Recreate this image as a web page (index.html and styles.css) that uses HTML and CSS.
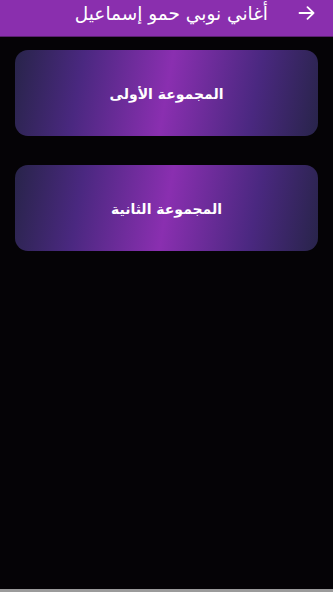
FILE: index.html
```html
<!DOCTYPE html>
<html lang="ar" dir="rtl">
<head>
<meta charset="utf-8">
<link rel="stylesheet" href="styles.css">
</head>
<body>
<div class="screen">
  <header class="appbar">
    <span class="back">
      <svg width="17" height="14" viewBox="0 0 17 14" fill="none" stroke="#fff" stroke-width="1.8" stroke-linecap="round" stroke-linejoin="round"><path d="M1.5 7H15.5M9.5 1.2L15.5 7L9.5 12.8"/></svg>
    </span>
    <h1 class="title">أغاني نوبي حمو إسماعيل</h1>
  </header>
  <main class="list">
    <div class="card">المجموعة الأولى</div>
    <div class="card">المجموعة الثانية</div>
  </main>
  <div class="navline"></div>
</div>
</body>
</html>
```
FILE: styles.css
```css
html, body {
  margin: 0;
  padding: 0;
  background: #050306;
}
body {
  font-family: "DejaVu Sans", "Noto Sans", sans-serif;
  width: 333px;
  height: 592px;
  overflow: hidden;
}
.screen {
  display: flex;
  flex-direction: column;
  height: 592px;
}
.appbar {
  background: #8a2fae;
  border-bottom: 1px solid #5a2070;
  display: flex;
  align-items: center;
  padding-right: 18px;
  gap: 30px;
  box-sizing: border-box;
  flex: 0 0 37px;
}
.back {
  display: flex;
  align-items: center;
  margin-top: -10px;
}
.title {
  margin: -9px 0 0 0;
  font-size: 18.5px;
  font-weight: normal;
  color: #fff;
}
.list {
  flex: 1;
  display: flex;
  flex-direction: column;
  gap: 29px;
  padding: 13px 15px 0 15px;
}
.card {
  height: 86px;
  border-radius: 13px;
  background: linear-gradient(100deg, #28244a 0%, #4a2880 22%, #8a2fb0 50%, #4a2880 78%, #28244a 100%);
  display: flex;
  align-items: center;
  justify-content: center;
  color: #fff;
  font-weight: bold;
  font-size: 14px;
  padding-top: 2px;
  box-sizing: border-box;
}
.navline {
  height: 3px;
  background: #9b9b9b;
  flex: 0 0 3px;
}
```
